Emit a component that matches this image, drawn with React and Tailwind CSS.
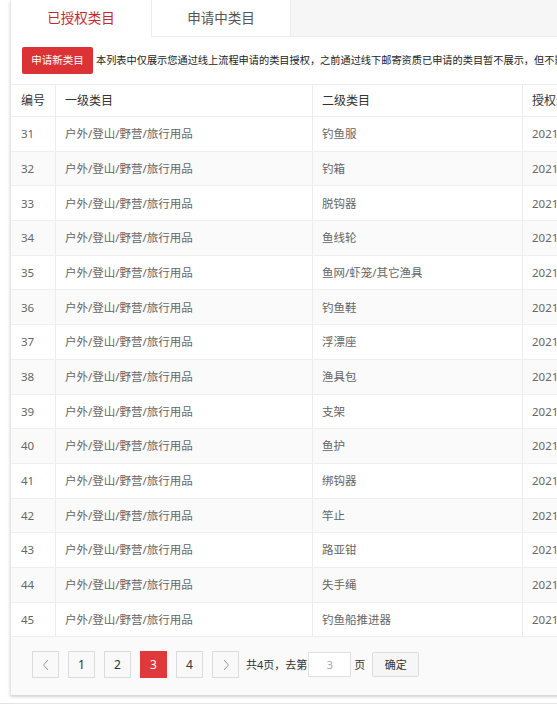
import React from 'react';

const rows = [
    [31, '钓鱼服'],
    [32, '钓箱'],
    [33, '脱钩器'],
    [34, '鱼线轮'],
    [35, '鱼网/虾笼/其它渔具'],
    [36, '钓鱼鞋'],
    [37, '浮漂座'],
    [38, '渔具包'],
    [39, '支架'],
    [40, '鱼护'],
    [41, '绑钩器'],
    [42, '竿止'],
    [43, '路亚钳'],
    [44, '失手绳'],
    [45, '钓鱼船推进器'],
];

const PageBtn = ({ children, active }) => (
    <div
        className={`w-[27px] h-[27px] shrink-0 flex items-center justify-center text-[12px] border ${
            active
                ? 'bg-[#e0393c] border-[#e0393c] text-white'
                : 'bg-[#f9f9f9] border-[#dcdcdc] text-[#333]'
        }`}
    >
        {children}
    </div>
);

const App = () => {
    return (
        <div className="w-[557px] h-[707px] bg-white overflow-hidden font-['Noto_Sans','Noto_Sans_CJK_SC',sans-serif]">
            <div className="ml-[10px] w-[720px] border-l border-[#e6e6e6] bg-white shadow-[0_2px_3px_rgba(0,0,0,0.18)]">
                {/* Tabs */}
                <div className="flex h-[37px]">
                    <div className="w-[140px] shrink-0 flex items-center justify-center text-[13.5px] text-[#c8282c]">
                        已授权类目
                    </div>
                    <div className="w-[140px] shrink-0 flex items-center justify-center text-[13.5px] text-[#555] border-x border-b border-[#ececec]">
                        申请中类目
                    </div>
                    <div className="flex-1 bg-[#f6f6f6] border-b border-[#ececec]"></div>
                </div>

                {/* Toolbar */}
                <div className="flex items-center h-[47px] pl-[11px] whitespace-nowrap">
                    <div className="h-[27px] w-[71px] shrink-0 bg-[#dc3236] rounded-[2px] text-white text-[10.5px] flex items-center justify-center">
                        申请新类目
                    </div>
                    <span className="ml-[3px] text-[10.2px] text-[#222]">
                        本列表中仅展示您通过线上流程申请的类目授权，之前通过线下邮寄资质已申请的类目暂不展示，但不影响您的正常经营。
                    </span>
                </div>

                {/* Table */}
                <div className="text-[12px]">
                    <div className="flex h-[33px] border-y border-[#ececec] text-[#333]">
                        <div className="w-[45px] shrink-0 pl-[10px] flex items-center border-r border-[#ececec]">编号</div>
                        <div className="w-[257px] shrink-0 pl-[9px] flex items-center border-r border-[#ececec]">一级类目</div>
                        <div className="w-[210px] shrink-0 pl-[9px] flex items-center border-r border-[#ececec]">二级类目</div>
                        <div className="flex-1 pl-[9px] flex items-center whitespace-nowrap">授权通过时间</div>
                    </div>
                    {rows.map(([id, name], i) => (
                        <div
                            key={id}
                            className={`flex h-[34.7px] border-b border-[#efefef] text-[11.5px] text-[#666] ${
                                i % 2 === 1 ? 'bg-[#fafafa]' : 'bg-white'
                            }`}
                        >
                            <div className="w-[45px] shrink-0 pl-[10px] flex items-center border-r border-[#ececec]">{id}</div>
                            <div className="w-[257px] shrink-0 pl-[9px] flex items-center border-r border-[#ececec]">户外/登山/野营/旅行用品</div>
                            <div className="w-[210px] shrink-0 pl-[9px] flex items-center border-r border-[#ececec]">{name}</div>
                            <div className="flex-1 pl-[9px] flex items-center whitespace-nowrap">2021-06-18 10:25:33</div>
                        </div>
                    ))}
                </div>

                {/* Pagination */}
                <div className="h-[58px] bg-[#fafafa] flex items-start pt-[14px] pl-[21px]">
                    <div className="flex items-center gap-[9px]">
                        <PageBtn>
                            <svg width="8" height="12" viewBox="0 0 8 12" fill="none" stroke="#999" strokeWidth="1">
                                <path d="M6 1 L1.5 6 L6 11" />
                            </svg>
                        </PageBtn>
                        <PageBtn>1</PageBtn>
                        <PageBtn>2</PageBtn>
                        <PageBtn active>3</PageBtn>
                        <PageBtn>4</PageBtn>
                        <PageBtn>
                            <svg width="8" height="12" viewBox="0 0 8 12" fill="none" stroke="#999" strokeWidth="1">
                                <path d="M2 1 L6.5 6 L2 11" />
                            </svg>
                        </PageBtn>
                    </div>
                    <div className="flex items-center h-[27px] ml-[7px] text-[11px] text-[#333] whitespace-nowrap">
                        <span>共4页，去第</span>
                        <div className="w-[43px] h-[25px] ml-[1px] bg-white border border-[#e0e0e0] flex items-center justify-center text-[#aaa]">
                            3
                        </div>
                        <span className="ml-[3px]">页</span>
                        <div className="ml-[7px] w-[47px] h-[25px] bg-[#f6f6f6] border border-[#dcdcdc] rounded-[2px] flex items-center justify-center text-[11px]">
                            确定
                        </div>
                    </div>
                </div>
            </div>
            <div className="mt-[8px] border-t border-[#e3e3e3]"></div>
        </div>
    );
};

export default App;
